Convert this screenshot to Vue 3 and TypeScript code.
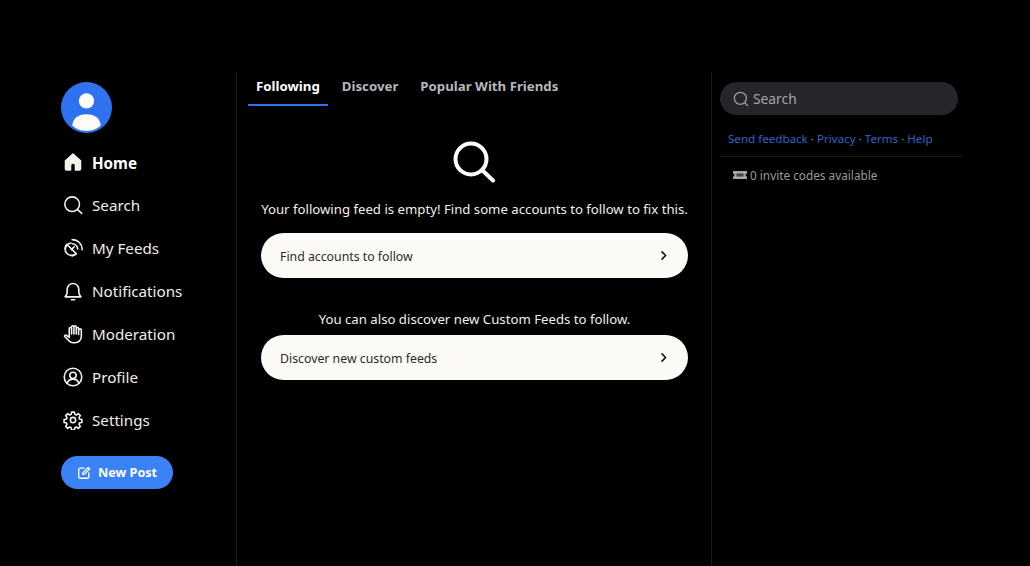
<script setup lang="ts">
interface NavItem { label: string; icon: string; active?: boolean }
const nav: NavItem[] = [
  { label: 'Home', icon: 'home', active: true },
  { label: 'Search', icon: 'search' },
  { label: 'My Feeds', icon: 'feeds' },
  { label: 'Notifications', icon: 'bell' },
  { label: 'Moderation', icon: 'hand' },
  { label: 'Profile', icon: 'profile' },
  { label: 'Settings', icon: 'gear' },
]
const tabs = ['Following', 'Discover', 'Popular With Friends']
</script>

<template>
  <div class="page">
    <aside class="left">
      <div class="avatar">
        <svg viewBox="0 0 50 50" width="51" height="51">
          <circle cx="25" cy="25" r="25" fill="#2f72f0" />
          <circle cx="25" cy="18.5" r="7.5" fill="#fdfcf9" />
          <path d="M11 42.5C12 34.5 18 31.5 25 31.5S38 34.5 39 42.5C35.5 46.5 30.5 48 25 48S14.500 46.500 11 42.500Z" fill="#fdfcf9" />
        </svg>
      </div>
      <nav class="nav">
        <a v-for="item in nav" :key="item.label" class="nav-item" :class="{ active: item.active }">
          <svg class="nav-icon" viewBox="0 0 24 24" width="22" height="22" fill="none" stroke="currentColor" stroke-width="1.9" stroke-linecap="round" stroke-linejoin="round">
            <template v-if="item.icon === 'home'">
              <path d="M3 10.500 12 2.500l9 8V20a1.500 1.500 0 0 1-1.500 1.500H15V16a3 3 0 0 0-6 0v5.500H4.500A1.500 1.500 0 0 1 3 20Z" fill="currentColor" />
            </template>
            <template v-else-if="item.icon === 'search'">
              <circle cx="11" cy="11" r="8.800" /><path d="m17.500 17.500 5 4.500" />
            </template>
            <template v-else-if="item.icon === 'feeds'">
              <path d="M4.500 7.500a8 8 0 0 0 11.300 11.300Z" /><path d="M3 12.500a8 8 0 0 1 6.500-6.500M11 21.500a8 8 0 0 0 5-2.500" /><path d="M10 14l3.500-3.500" /><path d="M11 6.800a6.500 6.500 0 0 1 6.500 6.500M11 2a11.500 11.500 0 0 1 12 12" />
            </template>
            <template v-else-if="item.icon === 'bell'">
              <path d="M2.500 19c1.500-1.500 2.500-3 2.500-5.500V10a7 7 0 0 1 14 0v3.500c0 2.500 1 4 2.500 5.500Z" /><path d="M10 22.500h4" />
            </template>
            <template v-else-if="item.icon === 'hand'">
              <path d="M22 7.500V15a7.500 7.500 0 0 1-7.500 7.500h-2a7.500 7.500 0 0 1-5.500-2.500L2 15c-.8-1 .8-2.500 2-1.500L7.500 16V5.500a1.400 1.400 0 0 1 2.800 0V12M10.300 3.500a1.400 1.400 0 0 1 2.800 0v8.500M13.100 3.500a1.400 1.400 0 0 1 2.800 0V12M15.900 5.500a1.400 1.400 0 0 1 2.800 0v7M18.700 7.500a1.500 1.500 0 0 1 3.300 0" />
            </template>
            <template v-else-if="item.icon === 'profile'">
              <circle cx="12" cy="12" r="10.500" /><circle cx="12" cy="10" r="3.800" /><path d="M5 19.500c1-3.200 3.800-5 7-5s6 1.800 7 5" />
            </template>
            <template v-else>
              <circle cx="12" cy="12" r="3.200" /><path d="M10.300 2.500h3.400l.5 2.700 1.900.8 2.300-1.600 2.400 2.400-1.600 2.300.8 1.900 2.700.5v3.400l-2.700.5-.8 1.900 1.600 2.300-2.400 2.400-2.300-1.600-1.900.8-.5 2.700h-3.400l-.5-2.700-1.900-.8-2.300 1.600-2.400-2.400 1.600-2.300-.8-1.900-2.700-.5v-3.400l2.700-.5.8-1.900-1.600-2.300 2.400-2.400 2.300 1.600 1.900-.8Z" />
            </template>
          </svg>
          <span>{{ item.label }}</span>
        </a>
      </nav>
      <button class="new-post">
        <svg viewBox="0 0 16 16" width="14" height="14" fill="none" stroke="currentColor" stroke-width="1.500" stroke-linecap="round" stroke-linejoin="round">
          <path d="M8 2.500H3.500a1.500 1.500 0 0 0-1.500 1.500v8.500A1.500 1.500 0 0 0 3.500 14H12a1.500 1.500 0 0 0 1.500-1.500V8" />
          <path d="M6.500 9.500 7 7.300 12.800 1.700l1.700 1.700L8.700 9Z" />
        </svg>
        <span>New Post</span>
      </button>
    </aside>

    <main class="center">
      <div class="tabs">
        <div v-for="(t, i) in tabs" :key="t" class="tab" :class="{ selected: i === 0 }">{{ t }}</div>
      </div>
      <div class="empty">
        <svg class="big-search" viewBox="0 0 42 42" width="42" height="42" fill="none" stroke="#fff" stroke-width="4" stroke-linecap="round">
          <circle cx="18" cy="18" r="15.500" /><path d="m29.500 29.500 10.500 10" />
        </svg>
        <p class="msg first">Your following feed is empty! Find some accounts to follow to fix this.</p>
        <button class="cta">
          <span class="cta-label">Find accounts to follow</span>
          <svg viewBox="0 0 10 12" width="8" height="11" fill="none" stroke="#111" stroke-width="2" stroke-linecap="round" stroke-linejoin="round"><path d="m2.500 1.500 4.500 4.500-4.500 4.500" /></svg>
        </button>
        <p class="msg second">You can also discover new Custom Feeds to follow.</p>
        <button class="cta">
          <span class="cta-label">Discover new custom feeds</span>
          <svg viewBox="0 0 10 12" width="8" height="11" fill="none" stroke="#111" stroke-width="2" stroke-linecap="round" stroke-linejoin="round"><path d="m2.500 1.500 4.500 4.500-4.500 4.500" /></svg>
        </button>
      </div>
    </main>

    <aside class="right">
      <div class="search">
        <svg viewBox="0 0 24 24" width="16" height="16" fill="none" stroke="#9a9a9f" stroke-width="2" stroke-linecap="round"><circle cx="11" cy="11" r="9" /><path d="m18 18 4 4" /></svg>
        <span>Search</span>
      </div>
      <div class="links">
        <a>Send feedback</a><span class="dot"> · </span><a>Privacy</a><span class="dot"> · </span><a>Terms</a><span class="dot"> · </span><a>Help</a>
      </div>
      <div class="invite">
        <svg viewBox="0 0 14 10" width="14" height="10"><path d="M0 1h14v2.500a1.500 1.500 0 0 0 0 3V9H0V6.500a1.500 1.500 0 0 0 0-3Z" fill="#a8a8a8" /><rect x="3.500" y="3.500" width="7" height="3" fill="#444" /></svg>
        <span>0 invite codes available</span>
      </div>
    </aside>
  </div>
</template>

<style>
html, body { margin: 0; background: #000; }
</style>

<style scoped>
.page {
  display: grid;
  grid-template-columns: 237px 475px 1fr;
  width: 1030px;
  height: 566px;
  padding-top: 72px;
  box-sizing: border-box;
  background: #000;
  color: #fff;
  font-family: "Noto Sans", "Open Sans", sans-serif;
  overflow: hidden;
}
.left {
  border-right: 1px solid #1c1c1e;
  padding: 10px 0 0 61px;
  box-sizing: border-box;
}
.avatar { width: 51px; height: 51px; }
.avatar svg { display: block; }
.nav { display: flex; flex-direction: column; margin-top: 8px; gap: 0; }
.nav-item {
  display: flex;
  align-items: center;
  gap: 18px;
  height: 43px;
  font-size: 15.200px;
  line-height: 20px;
  color: #f0eee9;
}
.nav-item span { margin-top: -1px; }
.nav-item.active span { margin-top: 0; }
.nav-item.active { font-weight: 700; color: #fff; }
.nav-icon { flex: none; color: #f4f2ed; width: 20px; height: 20px; margin-left: 2px; margin-right: -9px; margin-top: -1px; }
.new-post {
  display: flex;
  align-items: center;
  gap: 7px;
  margin-top: 14px;
  width: 112px;
  height: 33px;
  padding: 0 0 0 16px;
  border: 0;
  border-radius: 17px;
  background: #3b82f6;
  color: #fff;
  font: 700 12.600px "Noto Sans", "Open Sans", sans-serif;
  box-sizing: border-box;
}
.center {
  border-right: 1px solid #1c1c1e;
  box-sizing: border-box;
}
.tabs { display: flex; padding-left: 11px; gap: 6px; height: 35px; }
.tab {
  padding: 0 8px;
  height: 34px;
  line-height: 29px;
  font-size: 13.250px;
  font-weight: 700;
  color: #b7b7bd;
  box-sizing: border-box;
}
.tab.selected { color: #fff; border-bottom: 2px solid #2f72f0; }
.empty {
  display: flex;
  flex-direction: column;
  align-items: center;
  padding: 34px 23px 0 24px;
}
.big-search { display: block; margin-left: -2px; }
.msg { margin: 0; font-size: 13.200px; line-height: 18px; color: #f1efea; text-align: center; }
.msg.first { margin-top: 17px; }
.msg.second { margin-top: 32px; }
.cta {
  display: flex;
  align-items: center;
  justify-content: space-between;
  align-self: stretch;
  height: 45px;
  padding: 0 20px 0 19px;
  border: 0;
  border-radius: 23px;
  background: #fbfaf6;
  color: #2b2b2b;
  font: 400 12.300px "Noto Sans", "Open Sans", sans-serif;
}
.cta-label { padding-top: 1px; }
.msg.first + .cta { margin-top: 15px; }
.msg.second + .cta { margin-top: 7px; }
.right { padding: 10px 0 0 8px; width: 250px; box-sizing: border-box; }
.search {
  display: flex;
  align-items: center;
  gap: 4px;
  width: 238px;
  height: 33px;
  padding-left: 13px;
  box-sizing: border-box;
  border-radius: 17px;
  background: #26262a;
  color: #a4a4a8;
  font-size: 13.800px;
}
.links {
  margin-top: 15px;
  padding: 0 0 7px 8px;
  width: 242px;
  box-sizing: border-box;
  border-bottom: 1px solid #1c1c1e;
  font-size: 11.600px;
  line-height: 18px;
  height: 27px;
  color: #2f63c8;
  white-space: nowrap;
}
.dot { color: #888; }
.invite {
  display: flex;
  align-items: center;
  gap: 3px;
  margin-top: 9px;
  padding-left: 13px;
  font-size: 11.800px;
  line-height: 18px;
  color: #9a9a9e;
}
</style>
